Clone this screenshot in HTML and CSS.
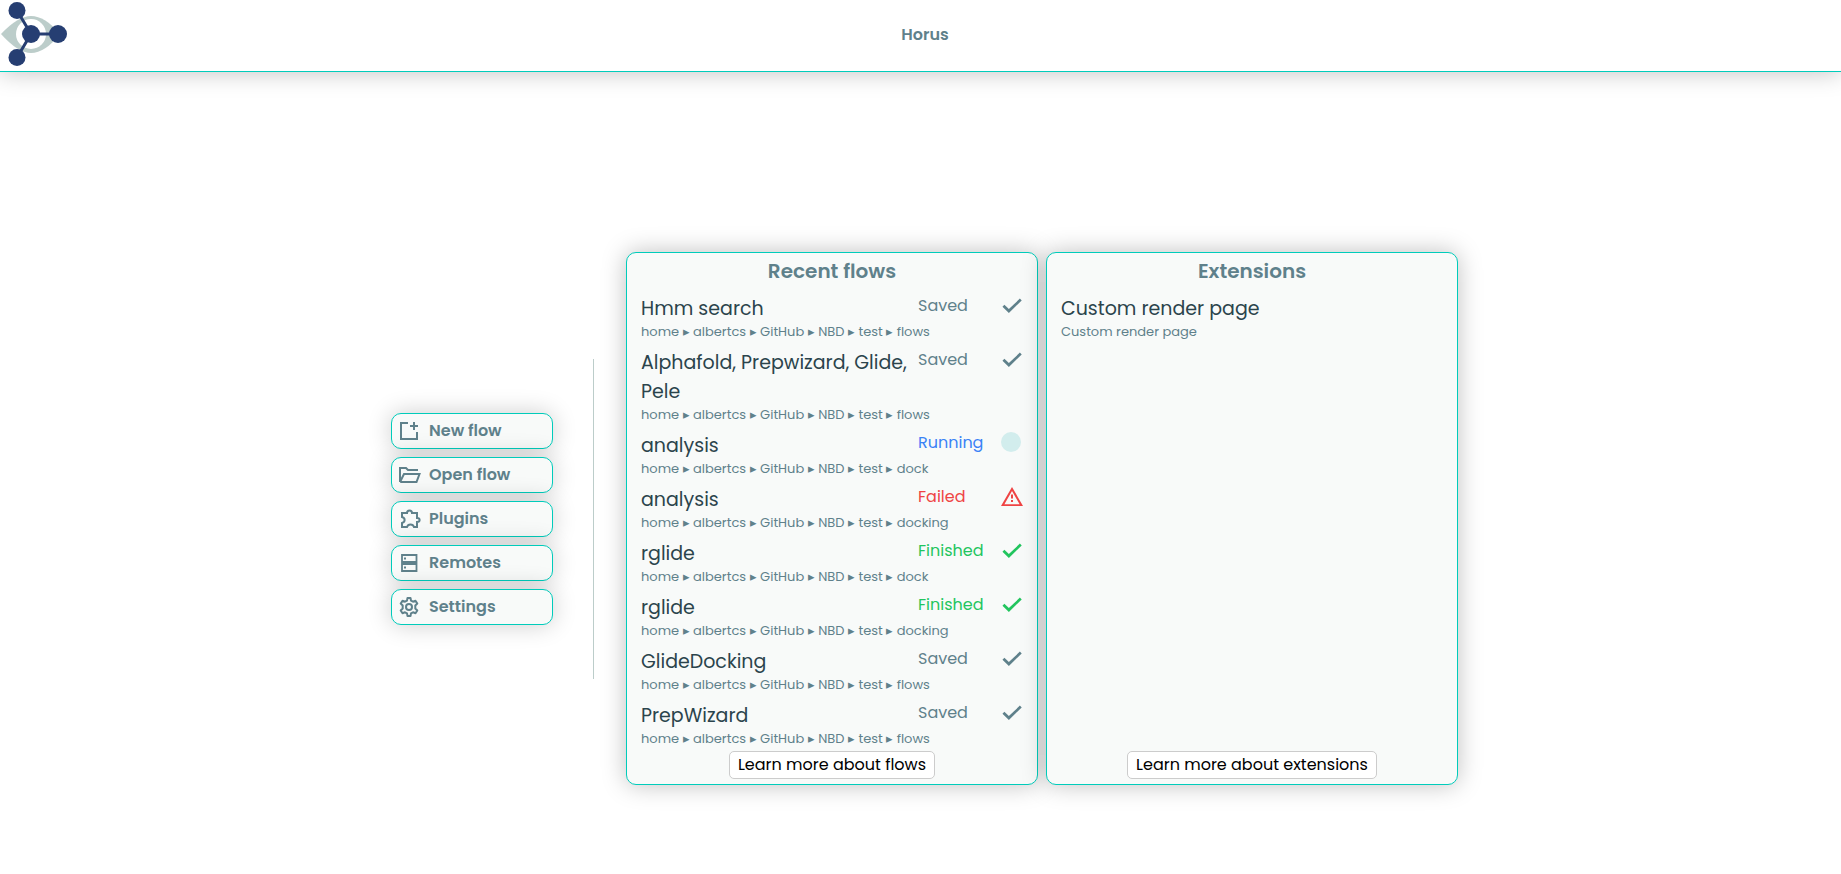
FILE: index.html
```html
<!DOCTYPE html>
<html lang="en">
<head>
<meta charset="utf-8">
<title>Horus</title>
<meta name="viewport" content="width=device-width, initial-scale=1">
<link rel="stylesheet" href="styles.css">
</head>
<body>
<svg class="sprite" aria-hidden="true">
  <symbol id="check" viewBox="0 0 24 24"><path fill="currentColor" d="M8.600 19.500 1.600 12.900 3.700 10.700 8.600 15.400 20.600 3.900 22.600 6z"/></symbol>
  <symbol id="warning" viewBox="0 0 22 22"><path fill="currentColor" d="M11 1 0 20h22L11 1zm0 4 7.600 13.200H3.400L11 5zm-1 3.500v4h2v-4h-2zm0 5.500v2h2v-2h-2z"/></symbol>
</svg>
<header class="topbar">
  <svg class="logo" viewBox="0 0 68 68" role="img" aria-label="Horus logo">
    <path fill="#bccdca" d="M1 34Q18 16 31 16Q45 16 60 34Q45 53 31 53Q18 53 1 34z"/>
    <circle cx="31" cy="34" r="15" fill="#fff"/>
    <path d="M17 10.500 31 34H58M31 34 17 57.500" fill="none" stroke="#263e72" stroke-width="3"/>
    <g fill="#263e72"><circle cx="17" cy="10.500" r="8.500"/><circle cx="31" cy="34" r="9"/><circle cx="58" cy="34" r="9"/><circle cx="17" cy="57.500" r="8.500"/></g>
  </svg>
  <h1 class="app-title">Horus</h1>
</header>
<main class="home">
  <nav class="menu">
    <button class="menu-item" type="button"><svg class="icon" viewBox="0 0 20 20" fill="none" stroke="currentColor" stroke-width="2"><path d="M9 2H2V18H18V11M15 1V9M11 5H19"/></svg>New flow</button>
    <button class="menu-item" type="button"><svg class="icon" viewBox="0 0 20 20" fill="none" stroke="currentColor" stroke-width="2"><path d="M1 17V3H7L9 5H19M1 17 5 9H20.500L17.500 17H1"/></svg>Open flow</button>
    <button class="menu-item" type="button"><svg class="icon" viewBox="0 0 20 20" fill="none" stroke="currentColor" stroke-width="2"><path d="M3 4H8C8 0.500 13 0.500 13 4H18V9C21.500 9 21.500 13 18 13V18H15C14 14.500 9 14.500 8 18H3V14C6.500 13 6.500 9 3 8z"/></svg>Plugins</button>
    <button class="menu-item" type="button"><svg class="icon" viewBox="0 0 20 20" fill="none" stroke="currentColor" stroke-width="1.800"><path d="M3 2H17.500V9H3zM3 11H17.500V18H3z"/><path stroke-width="2" d="M5 5.500H7M5 14.500H7"/></svg>Remotes</button>
    <button class="menu-item" type="button"><svg class="icon" viewBox="0 0 20 20" fill="none" stroke="currentColor" stroke-width="2" stroke-linejoin="round"><path d="M8.500 1H11.500L12 3.600 14 4.700 16.500 3.800 18.300 6.500 16.300 8.500V11.500L18.300 13.500 16.500 16.200 14 15.300 12 16.400 11.500 19H8.500L8 16.400 6 15.300 3.500 16.200 1.700 13.500 3.700 11.500V8.500L1.700 6.500 3.500 3.800 6 4.700 8 3.600z"/><circle cx="10" cy="10" r="3"/></svg>Settings</button>
  </nav>
  <div class="divider"></div>
  <div class="panels">
    <section class="panel">
      <h2 class="panel-title">Recent flows</h2>
      <ul class="list">
        <li class="flow"><span class="name">Hmm search</span><span class="status">Saved</span><svg class="mark"><use href="#check"/></svg><span class="path">home ▸ albertcs ▸ GitHub ▸ NBD ▸ test ▸ flows</span></li>
        <li class="flow"><span class="name">Alphafold, Prepwizard, Glide, Pele</span><span class="status">Saved</span><svg class="mark"><use href="#check"/></svg><span class="path">home ▸ albertcs ▸ GitHub ▸ NBD ▸ test ▸ flows</span></li>
        <li class="flow"><span class="name">analysis</span><span class="status running">Running</span><span class="pulse"></span><span class="path">home ▸ albertcs ▸ GitHub ▸ NBD ▸ test ▸ dock</span></li>
        <li class="flow"><span class="name">analysis</span><span class="status failed">Failed</span><svg class="mark failed"><use href="#warning"/></svg><span class="path">home ▸ albertcs ▸ GitHub ▸ NBD ▸ test ▸ docking</span></li>
        <li class="flow"><span class="name">rglide</span><span class="status finished">Finished</span><svg class="mark finished"><use href="#check"/></svg><span class="path">home ▸ albertcs ▸ GitHub ▸ NBD ▸ test ▸ dock</span></li>
        <li class="flow"><span class="name">rglide</span><span class="status finished">Finished</span><svg class="mark finished"><use href="#check"/></svg><span class="path">home ▸ albertcs ▸ GitHub ▸ NBD ▸ test ▸ docking</span></li>
        <li class="flow"><span class="name">GlideDocking</span><span class="status">Saved</span><svg class="mark"><use href="#check"/></svg><span class="path">home ▸ albertcs ▸ GitHub ▸ NBD ▸ test ▸ flows</span></li>
        <li class="flow"><span class="name">PrepWizard</span><span class="status">Saved</span><svg class="mark"><use href="#check"/></svg><span class="path">home ▸ albertcs ▸ GitHub ▸ NBD ▸ test ▸ flows</span></li>
      </ul>
      <button class="learn" type="button">Learn more about flows</button>
    </section>
    <section class="panel">
      <h2 class="panel-title">Extensions</h2>
      <ul class="list">
        <li class="flow"><span class="name wide">Custom render page</span><span class="path">Custom render page</span></li>
      </ul>
      <button class="learn" type="button">Learn more about extensions</button>
    </section>
  </div>
</main>
</body>
</html>
```
FILE: styles.css
```css
* { box-sizing: border-box; }

body {
  margin: 0;
  background: #fff;
  color: #5f818b;
  font: 16px/24px Poppins, Inter, "Open Sans", sans-serif;
}

button { font: inherit; cursor: pointer; }
.sprite { display: none; }

.topbar {
  display: flex;
  align-items: center;
  height: 72px;
  padding: 0 59px 3px 0;
  border-bottom: 1px solid #0cb;
  box-shadow: 0 0 24px rgba(0, 0, 0, 0.25);
}
.logo { width: 68px; height: 68px; }
.app-title {
  flex: 1;
  margin: 0;
  padding-top: 2px;
  font-size: 16px;
  font-weight: 600;
  text-align: center;
}

.home {
  display: flex;
  align-items: center;
  justify-content: center;
  padding: 180px 0 40px 8px;
}

.menu {
  display: flex;
  flex-direction: column;
  gap: 8px;
  width: 162px;
}
.menu-item {
  display: flex;
  align-items: center;
  gap: 10px;
  height: 36px;
  padding: 0 7px;
  border: 1px solid #0cb;
  border-radius: 10px;
  background: #f8faf9;
  box-shadow: 0 0 24px rgba(0, 0, 0, 0.2);
  color: #5f818b;
  font-weight: 600;
}
.icon { width: 20px; height: 20px; overflow: visible; }

.divider {
  width: 1px;
  height: 320px;
  margin: 0 32px 0 40px;
  background: #bccdca;
}

.panels { display: flex; gap: 8px; }
.panel {
  display: flex;
  flex-direction: column;
  align-items: center;
  width: 412px;
  padding: 3px 14px 5px;
  border: 1px solid #0cb;
  border-radius: 10px;
  background: #f8faf9;
  box-shadow: 0 0 24px rgba(0, 0, 0, 0.25);
}
.panel-title {
  margin: 0 0 8px;
  font-size: 20px;
  line-height: 30px;
  font-weight: 600;
}

.list {
  display: flex;
  flex: 1;
  flex-direction: column;
  gap: 8px;
  width: 100%;
  margin: 0 0 4px;
  padding: 0;
  list-style: none;
}
.flow {
  display: grid;
  grid-template-columns: 1fr 83px 22px;
}
.name {
  color: #2b444c;
  font-size: 19px;
  line-height: 29px;
}
.wide { grid-column: 1 / -1; }
.path {
  grid-column: 1 / -1;
  font-size: 13px;
  line-height: 17px;
}
.mark {
  width: 22px;
  height: 22px;
  margin-top: 1px;
}
.pulse {
  width: 20px;
  height: 20px;
  margin: 1px 0;
  border-radius: 50%;
  background: #d2eded;
}
.running { color: #3b82f6; }
.failed { color: #ef4444; }
.finished { color: #22c55e; }

.learn {
  height: 28px;
  padding: 0 8px;
  border: 1px solid #ccc;
  border-radius: 5px;
  background: #fff;
  color: #000;
}
```
